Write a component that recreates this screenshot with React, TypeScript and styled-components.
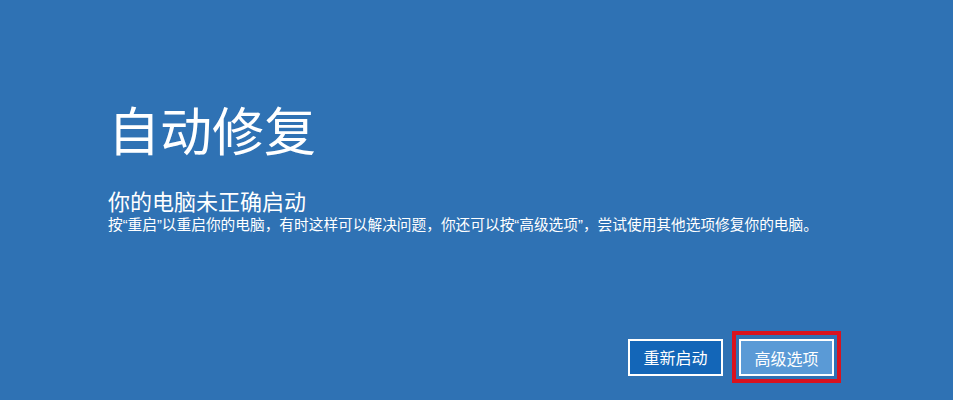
import styled, { createGlobalStyle } from "styled-components";

const GlobalStyle = createGlobalStyle`
	html, body {
		margin: 0;
		padding: 0;
		background: #2f72b4;
	}
	body {
		font-family: "Noto Sans CJK SC", "Noto Sans", sans-serif;
		color: #ffffff;
	}
`;

const Screen = styled.div`
	width: 100%;
	height: 100vh;
	box-sizing: border-box;
	display: flex;
	flex-direction: column;
	background: #2f72b4;
	padding: 103px 112px 17px 108px;
`;

const Title = styled.h1`
	margin: 0;
	font-size: 52px;
	font-weight: 400;
	line-height: 1;
`;

const Subtitle = styled.h2`
	margin: 33px 0 0 0;
	font-size: 22px;
	font-weight: 400;
	line-height: 24px;
`;

// Liberation Sans first so the curly quotes come out narrow like the original
const Message = styled.p`
	margin: 5px 0 0 0;
	font-family: "Liberation Sans", "Noto Sans CJK SC", sans-serif;
	font-size: 14.7px;
	line-height: 17px;
`;

const Actions = styled.div`
	margin-top: auto;
	display: flex;
	justify-content: flex-end;
	align-items: center;
	gap: 9px;
`;

const Button = styled.button<{ $primary?: boolean }>`
	width: 95px;
	height: 37px;
	box-sizing: border-box;
	border: 2px solid #ffffff;
	background: ${(p) => (p.$primary ? "#5a9ad6" : "#1366b8")};
	color: #ffffff;
	font-family: "Noto Sans CJK SC", sans-serif;
	font-size: 16px;
	padding: 0;
	cursor: pointer;
`;

const Highlight = styled.div`
	border: 4px solid #d8131f;
	padding: 4px 3px 3px 3px;
	display: flex;
`;

export default function App() {
	return (
		<>
			<GlobalStyle />
			<Screen>
				<Title>自动修复</Title>
				<Subtitle>你的电脑未正确启动</Subtitle>
				<Message>
					按“重启”以重启你的电脑，有时这样可以解决问题，你还可以按“高级选项”，尝试使用其他选项修复你的电脑。
				</Message>
				<Actions>
					<Button>重新启动</Button>
					<Highlight>
						<Button $primary>高级选项</Button>
					</Highlight>
				</Actions>
			</Screen>
		</>
	);
}
